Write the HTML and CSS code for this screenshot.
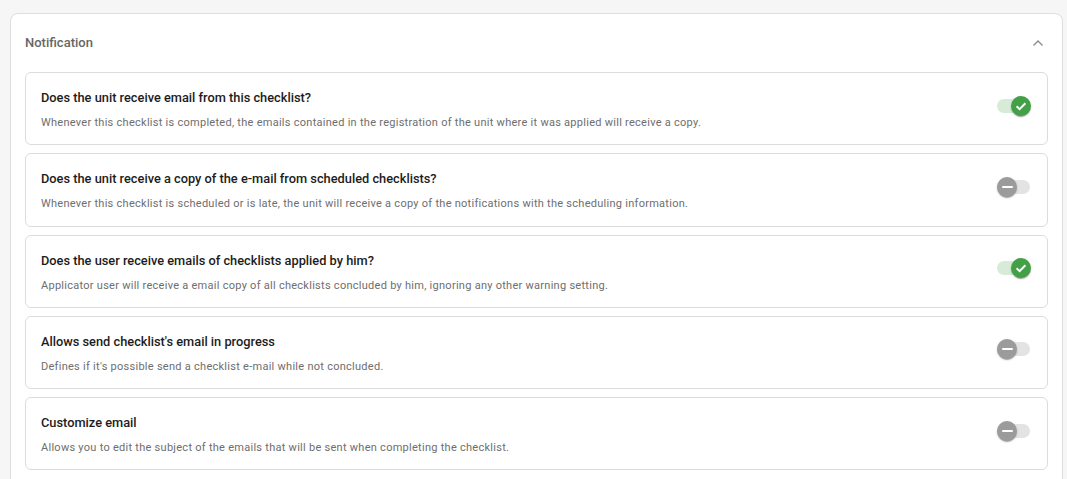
FILE: index.html
```html
<!DOCTYPE html>
<html>
<head>
<meta charset="utf-8">
<link rel="stylesheet" href="styles.css">
</head>
<body>
<div class="page">
  <section class="panel">
    <header class="panel-head">
      <span class="panel-title">Notification</span>
      <span class="chevron"><svg width="12" height="8" viewBox="0 0 12 8"><path d="M1.5 6.5 L6 2 L10.5 6.5" fill="none" stroke="#8a8a8a" stroke-width="1.3"/></svg></span>
    </header>
    <div class="list">
      <div class="item">
        <div class="text">
          <div class="title">Does the unit receive email from this checklist?</div>
          <div class="desc">Whenever this checklist is completed, the emails contained in the registration of the unit where it was applied will receive a copy.</div>
        </div>
        <div class="switch on"><span class="track"></span><span class="thumb"><svg width="20" height="20" viewBox="0 0 20 20"><path d="M5.6 10.2 L8.6 13.1 L14.4 7.2" fill="none" stroke="#fff" stroke-width="2"/></svg></span></div>
      </div>
      <div class="item">
        <div class="text">
          <div class="title">Does the unit receive a copy of the e-mail from scheduled checklists?</div>
          <div class="desc">Whenever this checklist is scheduled or is late, the unit will receive a copy of the notifications with the scheduling information.</div>
        </div>
        <div class="switch off"><span class="track"></span><span class="thumb"><span class="bar"></span></span></div>
      </div>
      <div class="item">
        <div class="text">
          <div class="title">Does the user receive emails of checklists applied by him?</div>
          <div class="desc">Applicator user will receive a email copy of all checklists concluded by him, ignoring any other warning setting.</div>
        </div>
        <div class="switch on"><span class="track"></span><span class="thumb"><svg width="20" height="20" viewBox="0 0 20 20"><path d="M5.6 10.2 L8.6 13.1 L14.4 7.2" fill="none" stroke="#fff" stroke-width="2"/></svg></span></div>
      </div>
      <div class="item">
        <div class="text">
          <div class="title">Allows send checklist's email in progress</div>
          <div class="desc">Defines if it's possible send a checklist e-mail while not concluded.</div>
        </div>
        <div class="switch off"><span class="track"></span><span class="thumb"><span class="bar"></span></span></div>
      </div>
      <div class="item">
        <div class="text">
          <div class="title">Customize email</div>
          <div class="desc">Allows you to edit the subject of the emails that will be sent when completing the checklist.</div>
        </div>
        <div class="switch off"><span class="track"></span><span class="thumb"><span class="bar"></span></span></div>
      </div>
    </div>
  </section>
</div>
</body>
</html>
```
FILE: styles.css
```css
* { box-sizing: border-box; }
html, body { margin: 0; padding: 0; }
body {
  background: #f6f6f6;
  font-family: Roboto, "Liberation Sans", Arial, sans-serif;
  height: 479px;
  overflow: hidden;
}
.page {
  padding: 13px 4px 0 10px;
}
.panel {
  background: #fff;
  border: 1px solid #dedede;
  border-radius: 8px;
  padding: 0 14px 20px 14px;
}
.panel-head {
  height: 58px;
  display: flex;
  align-items: center;
  justify-content: space-between;
  padding-bottom: 1px;
}
.panel-title {
  font-size: 13px;
  font-weight: 500;
  color: #666;
}
.chevron {
  width: 20px;
  display: flex;
  justify-content: center;
}
.list {
  display: flex;
  flex-direction: column;
  gap: 8px;
}
.item {
  border: 1px solid #dcdcdc;
  border-radius: 6px;
  padding: 16px 16px 13.25px 15px;
  display: flex;
  align-items: center;
  justify-content: space-between;
}
.title {
  font-size: 12.8px;
  font-weight: 500;
  line-height: 18px;
  color: #1c1c1c;
}
.desc {
  margin-top: 8px;
  font-size: 11px;
  letter-spacing: 0.27px;
  line-height: 16px;
  color: #6e6e6e;
}
.switch {
  position: relative;
  width: 34px;
  height: 20px;
  margin-bottom: 9px;
  flex-shrink: 0;
}
.track {
  position: absolute;
  left: 0;
  top: 3px;
  width: 33px;
  height: 14px;
  border-radius: 7px;
  background: #e3e3e3;
}
.switch.on .track { background: #d6ecd7; }
.thumb {
  position: absolute;
  top: 0;
  width: 20px;
  height: 20px;
  border-radius: 50%;
  box-shadow: 0 2px 1px -1px rgba(0,0,0,.2), 0 1px 1px 0 rgba(0,0,0,.14), 0 1px 3px 0 rgba(0,0,0,.12);
  display: flex;
  align-items: center;
  justify-content: center;
}
.switch.on .thumb { right: 0; background: #43a047; }
.switch.off .thumb { left: 0; background: #9b9b9b; }
.thumb svg { display: block; }
.bar {
  width: 11px;
  height: 2px;
  background: #fff;
  border-radius: 1px;
}
```
